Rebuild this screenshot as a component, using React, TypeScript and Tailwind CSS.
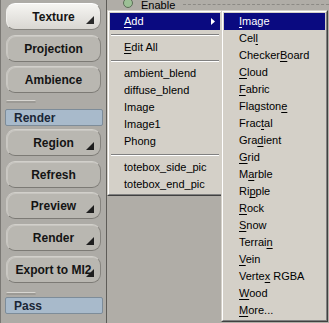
import React from "react";

const FONT = { fontFamily: '"Liberation Sans", Arial, sans-serif' };

function Tri({ light }: { light?: boolean }) {
  return (
    <svg width="8" height="8" viewBox="0 0 8 8" className="absolute right-[6px] bottom-[5px]">
      <polygon points="8,0 8,8 0,8" fill={light ? "#2a2a2a" : "#1e1e1e"} />
    </svg>
  );
}

function PanelButton({
  label,
  active,
  menu,
}: {
  label: string;
  active?: boolean;
  menu?: boolean;
}) {
  return (
    <div
      className={
        "relative h-[27px] w-[95px] ml-[5px] rounded-[9px] flex items-center justify-center text-[12px] font-bold text-[#141414] border " +
        (active
          ? "bg-gradient-to-b from-[#f6f5f2] to-[#d9d7d2] border-t-[#ffffff] border-l-[#f0efec] border-r-[#8f8d88] border-b-[#85837e]"
          : "bg-[#b9b7b1] border-t-[#d2d0cb] border-l-[#cac8c3] border-r-[#85837e] border-b-[#7c7a75] shadow-[inset_1px_1px_0_#c8c6c1]")
      }
    >
      {label}
      {menu && <Tri light={active} />}
    </div>
  );
}

function Header({ label }: { label: string }) {
  return (
    <div className="h-[17px] w-[98px] ml-[4px] rounded-[2px] bg-[#a8bacb] border border-[#7d8c99] flex items-center pl-[8px] text-[12px] font-bold text-[#1a2636]">
      {label}
    </div>
  );
}

function Stub() {
  return <div className="ml-[5px] w-[30px] h-[3px] rounded-full border-t border-[#d8d6d1] bg-[#9c9a95]" />;
}

type Item = { pre: string; key: string; post: string; hi?: boolean; arrow?: boolean } | "sep";

function MenuItem({ it, padL }: { it: Exclude<Item, "sep">; padL: string }) {
  return (
    <div
      className={
        "relative h-[17px] flex items-center text-[11px] leading-none " +
        padL +
        (it.hi ? " bg-[#0a0a80] text-white" : " text-black")
      }
    >
      <span>
        {it.pre}
        {it.key && <span className="underline underline-offset-[2px]">{it.key}</span>}
        {it.post}
      </span>
      {it.arrow && (
        <svg width="4" height="7" viewBox="0 0 4 7" className="absolute right-[5px] top-[5px]">
          <polygon points="0,0 4,3.5 0,7" fill={it.hi ? "#ffffff" : "#000000"} />
        </svg>
      )}
    </div>
  );
}

function Menu({ items, className, padL }: { items: Item[]; className: string; padL: string }) {
  return (
    <div
      className={
        "absolute bg-[#d4d0c8] border border-t-[#d4d0c8] border-l-[#d4d0c8] border-r-[#404040] border-b-[#404040] " +
        className
      }
    >
      <div className="border border-t-white border-l-white border-r-[#808080] border-b-[#808080] px-[1px] py-[1px]">
        {items.map((it, i) =>
          it === "sep" ? (
            <div key={i} className="h-[9px] flex flex-col justify-center px-[1px]">
              <div className="h-[1px] bg-[#808080]" />
              <div className="h-[1px] bg-white" />
            </div>
          ) : (
            <MenuItem key={i} it={it} padL={padL} />
          )
        )}
      </div>
    </div>
  );
}

const mainItems: Item[] = [
  { pre: "", key: "A", post: "dd", hi: true, arrow: true },
  "sep",
  { pre: "", key: "E", post: "dit All" },
  "sep",
  { pre: "ambient_blend", key: "", post: "" },
  { pre: "diffuse_blend", key: "", post: "" },
  { pre: "Image", key: "", post: "" },
  { pre: "Image1", key: "", post: "" },
  { pre: "Phong", key: "", post: "" },
  "sep",
  { pre: "totebox_side_pic", key: "", post: "" },
  { pre: "totebox_end_pic", key: "", post: "" },
];

const subItems: Item[] = [
  { pre: "", key: "I", post: "mage", hi: true },
  { pre: "Cel", key: "l", post: "" },
  { pre: "Checker", key: "B", post: "oard" },
  { pre: "", key: "C", post: "loud" },
  { pre: "", key: "F", post: "abric" },
  { pre: "Flagston", key: "e", post: "" },
  { pre: "Frac", key: "t", post: "al" },
  { pre: "Gra", key: "d", post: "ient" },
  { pre: "", key: "G", post: "rid" },
  { pre: "M", key: "a", post: "rble" },
  { pre: "Ri", key: "p", post: "ple" },
  { pre: "", key: "R", post: "ock" },
  { pre: "", key: "S", post: "now" },
  { pre: "Terrai", key: "n", post: "" },
  { pre: "", key: "V", post: "ein" },
  { pre: "Verte", key: "x", post: " RGBA" },
  { pre: "", key: "W", post: "ood" },
  { pre: "", key: "M", post: "ore..." },
];

export default function App() {
  return (
    <div className="relative w-[329px] h-[323px] overflow-hidden flex bg-[#b0ada7]" style={FONT}>
      {/* left tool panel */}
      <div className="w-[107px] h-full bg-[#adaba6] border-l border-[#7a7874] border-r border-r-[#5e5c58] flex flex-col pt-[3px]">
        <PanelButton label="Texture" active menu />
        <div className="mt-[5px]"><PanelButton label="Projection" /></div>
        <div className="mt-[4px]"><PanelButton label="Ambience" /></div>
        <div className="mt-[7px]"><Stub /></div>
        <div className="mt-[6px]"><Header label="Render" /></div>
        <div className="mt-[3px]"><PanelButton label="Region" menu /></div>
        <div className="mt-[5px]"><PanelButton label="Refresh" /></div>
        <div className="mt-[4px]"><PanelButton label="Preview" menu /></div>
        <div className="mt-[5px]"><PanelButton label="Render" menu /></div>
        <div className="mt-[5px]"><PanelButton label="Export to MI2" menu /></div>
        <div className="mt-[9px]"><Stub /></div>
        <div className="mt-[2px]"><Header label="Pass" /></div>
      </div>

      {/* right work area */}
      <div className="flex-1 h-full relative">
        <div className="h-[10px] flex items-center pl-[16px] gap-[8px]">
          <div className="w-[10px] h-[10px] rounded-full bg-[#9cc096] border border-[#5c6e58] mt-[-4px]" />
          <span className="text-[11px] leading-[10px] text-black">Enable</span>
          <div className="flex-1 h-0 border-t border-dashed border-[#8c8a85] mt-[-2px]" />
        </div>
      </div>

      <Menu items={mainItems} className="left-[107px] top-[10px] w-[116px]" padL="pl-[14px]" />
      <Menu items={subItems} className="left-[221px] top-[10px] w-[107px]" padL="pl-[15px]" />
    </div>
  );
}
